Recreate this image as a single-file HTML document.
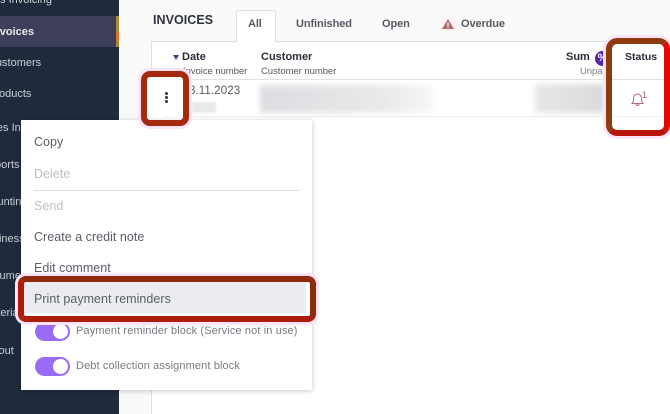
<!DOCTYPE html>
<html><head><meta charset="utf-8">
<style>
html,body{margin:0;padding:0}
body{width:670px;height:414px;overflow:hidden;position:relative;background:#fafafa;font-family:"Liberation Sans",sans-serif;color:#4a4f57}
.a{position:absolute;white-space:nowrap}
.s{color:#c9ced6;font-size:11px;font-weight:bold;left:0}
.m{left:34px;font-size:12.5px;color:#5a5f66;letter-spacing:.03px}
.h{font-size:11px;font-weight:bold;color:#2a2e38;letter-spacing:0}
.k{font-size:9.5px;color:#555a60;letter-spacing:-.05px}
.t{font-size:11px;font-weight:bold;color:#555a62;letter-spacing:-.1px}
.b{filter:blur(3px);background:#dcdee0}
.r{border-style:solid;box-sizing:border-box;box-shadow:0 0 0 3px #fde3f6}
.tg{width:35px;height:19px;border-radius:10px;background:#9a6cf5;left:35px}
.tg i{position:absolute;right:2px;top:2px;width:15px;height:15px;border-radius:50%;background:#fff}
.l{left:76px;font-size:11px;color:#777b80;letter-spacing:.12px}
</style></head><body>

<!-- sidebar -->
<div class="a" style="left:0;top:0;width:119px;height:414px;background:#1f2a3c"></div>
<div class="a" style="left:0;top:16px;width:116px;height:31px;background:#3e405a"></div>
<div class="a" style="left:116px;top:16px;width:3px;height:31px;background:linear-gradient(#a98a3a 0,#a98a3a 50%,#e0702a 50%,#e0702a 80%,#a98a3a 80%)"></div>
<div class="a s" style="top:-6px;left:-22px;font-weight:normal">Sales Invoicing</div>
<div class="a s" style="top:26px;left:-10px;color:#e8e9ee">Invoices</div>
<div class="a s" style="top:57px;left:-12px;font-weight:normal">Customers</div>
<div class="a s" style="top:88px;left:-12px;font-weight:normal">Products</div>
<div class="a s" style="top:122px;left:-19px;font-weight:normal">Sales Invoicing</div>
<div class="a s" style="top:159px;left:-19px;font-weight:normal">Reports</div>
<div class="a s" style="top:196px;left:-27px;font-weight:normal">Accounting</div>
<div class="a s" style="top:233px;left:-20px;font-weight:normal">Business</div>
<div class="a s" style="top:270px;left:-20px;font-weight:normal">Documents</div>
<div class="a s" style="top:307px;left:-18px;font-weight:normal">Materials</div>
<div class="a s" style="top:345px;left:-15px;font-weight:normal">About</div>

<!-- tabs -->
<div class="a" style="left:153px;top:13px;font-size:12.5px;font-weight:bold;color:#2f333c;letter-spacing:.05px">INVOICES</div>
<div class="a" style="left:236px;top:10px;width:40px;height:32px;box-sizing:border-box;background:#fff;border:1px solid #dcdee0;border-bottom:0;border-radius:3px 3px 0 0;z-index:2"></div>
<div class="a t" style="left:248px;top:18px;z-index:3">All</div>
<div class="a t" style="left:296px;top:18px">Unfinished</div>
<div class="a t" style="left:382px;top:18px">Open</div>
<div class="a" style="left:441px;top:17px;width:14px;height:14px;background:#fdeef7"></div>
<svg class="a" style="left:441px;top:17px" width="14" height="14" viewBox="0 0 14 14"><path d="M7 2 L13 12 H1 Z" fill="#a6706c"/><rect x="6.4" y="5.5" width="1.2" height="3.5" fill="#fff"/><rect x="6.4" y="9.7" width="1.2" height="1.2" fill="#fff"/></svg>
<div class="a t" style="left:461px;top:18px">Overdue</div>

<!-- table -->
<div class="a" style="left:151px;top:41px;width:519px;height:373px;background:#fff;border-left:1px solid #dcdee0;border-top:1px solid #dcdee0;box-sizing:border-box"></div>
<div class="a" style="left:151px;top:79px;width:519px;height:1px;background:#dfe1e3"></div>
<div class="a" style="left:151px;top:116px;width:519px;height:1px;background:#eeeff0"></div>
<svg class="a" style="left:173px;top:55px" width="6" height="5"><path d="M0 0H6L3 5Z" fill="#4a3a8a"/></svg>
<div class="a h" style="left:182px;top:51px">Date</div>
<div class="a k" style="left:183px;top:66px">Invoice number</div>
<div class="a h" style="left:261px;top:51px">Customer</div>
<div class="a k" style="left:261px;top:66px">Customer number</div>
<div class="a h" style="left:566px;top:51px">Sum</div>
<div class="a" style="left:595px;top:51px;width:15px;height:15px;border-radius:50%;background:#5a22a8;color:#fff;font-size:11px;font-weight:bold;text-align:center;line-height:14px">%</div>
<div class="a k" style="left:580px;top:66px;color:#777b80;width:29px;overflow:hidden">Unpaid</div>
<div class="a h" style="left:625px;top:51px;font-size:10.5px">Status</div>
<div class="a" style="left:189px;top:85px;font-size:11.5px;color:#555a60;letter-spacing:.1px">3.11.2023</div>
<div class="a b" style="left:192px;top:102px;width:24px;height:11px;filter:blur(1px);background:#e8e9ea"></div>
<div class="a b" style="left:260px;top:85px;width:172px;height:28px;background:linear-gradient(90deg,#dcdde0,#e8e9ea 70%,#f6f6f6)"></div>
<div class="a b" style="left:535px;top:84px;width:70px;height:29px;background:linear-gradient(90deg,#e6e7e8,#d8dadc)"></div>

<!-- bell -->
<svg class="a" style="left:630px;top:92px" width="16" height="15" viewBox="0 0 16 15" fill="none" stroke="#b36a80" stroke-width="1"><path d="M2 11.5 C3.5 10 3.5 8.5 3.5 6.5 C3.5 3.5 5.5 2 7.5 2 C9.5 2 11.5 3.5 11.5 6.5 C11.5 8.5 11.5 10 13 11.5 Z"/><path d="M6 12 C6 14 9 14 9 12"/></svg>
<div class="a" style="left:642px;top:90px;font-size:9px;color:#a8607a">1</div>

<!-- kebab -->
<div class="a" style="left:147px;top:77px;width:36px;height:43px;background:#fff"></div>
<div class="a" style="left:165px;top:92px;width:3px;height:3px;border-radius:50%;background:#30343c"></div>
<div class="a" style="left:165px;top:96px;width:3px;height:3px;border-radius:50%;background:#30343c"></div>
<div class="a" style="left:165px;top:100px;width:3px;height:3px;border-radius:50%;background:#30343c"></div>

<!-- menu -->
<div class="a" style="left:21px;top:120px;width:291px;height:270px;background:#fff;box-shadow:0 1px 5px rgba(0,0,0,.22)"></div>
<div class="a" style="left:162px;top:115px;width:0;height:0;border-left:5px solid transparent;border-right:5px solid transparent;border-bottom:5px solid #f3f3f3"></div>
<div class="a m" style="top:135px">Copy</div>
<div class="a m" style="top:167px;color:#bcbfc3">Delete</div>
<div class="a" style="left:34px;top:190px;width:265px;height:1px;background:#dcdee0"></div>
<div class="a m" style="top:199px;color:#bcbfc3">Send</div>
<div class="a m" style="top:230px">Create a credit note</div>
<div class="a m" style="top:261px">Edit comment</div>
<div class="a" style="left:24px;top:282px;width:282px;height:31px;background:#eaecef"></div>
<div class="a m" style="top:292px">Print payment reminders</div>
<div class="a tg" style="top:322px"><i></i></div>
<div class="a l" style="top:325px">Payment reminder block (Service not in use)</div>
<div class="a tg" style="top:357px"><i></i></div>
<div class="a l" style="top:360px">Debt collection assignment block</div>

<!-- red highlights -->
<div class="a r" style="left:141px;top:71px;width:48px;height:55px;border-width:6px;border-color:#a32a0c;border-radius:9px"></div>
<div class="a r" style="left:606px;top:38px;width:64px;height:98px;border-width:6px;border-color:#8f3a10 #e00a00 #b8140a #8f3a10;border-radius:11px"></div>
<div class="a r" style="left:18px;top:276px;width:298px;height:46px;border-width:6px;border-color:#8f2a0c #8f2a0c #ab1f0a #b01c08;border-radius:8px"></div>
</body></html>
